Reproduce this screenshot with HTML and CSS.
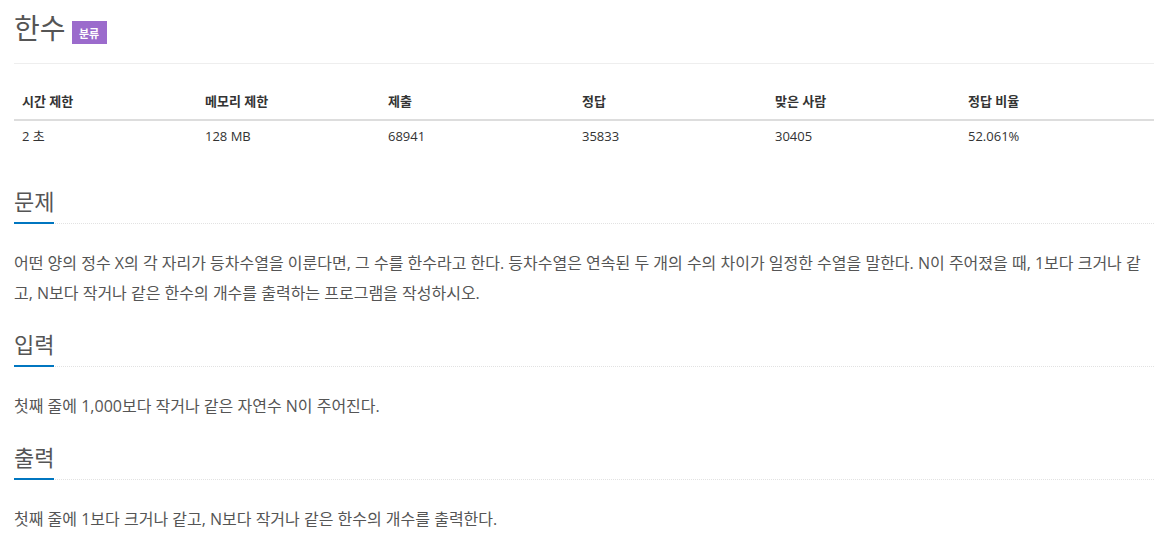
FILE: index.html
```html
<!DOCTYPE html>
<html lang="ko">
<head>
<meta charset="utf-8">
<title>한수</title>
<link rel="stylesheet" href="styles.css">
</head>
<body>
<div class="page">
  <div class="page-header">
    <h1 class="title">한수</h1>
    <span class="badge">분류</span>
  </div>

  <table class="info">
    <colgroup>
      <col class="c1"><col class="c2"><col class="c3"><col class="c4"><col class="c5"><col class="c6">
    </colgroup>
    <thead>
      <tr><th>시간 제한</th><th>메모리 제한</th><th>제출</th><th>정답</th><th>맞은 사람</th><th>정답 비율</th></tr>
    </thead>
    <tbody>
      <tr><td>2 초</td><td>128 MB</td><td>68941</td><td>35833</td><td>30405</td><td>52.061%</td></tr>
    </tbody>
  </table>

  <section class="section">
    <div class="headline"><h2>문제</h2></div>
    <p class="text">어떤 양의 정수 X의 각 자리가 등차수열을 이룬다면, 그 수를 한수라고 한다. 등차수열은 연속된 두 개의 수의 차이가 일정한 수열을 말한다. N이 주어졌을 때, 1보다 크거나 같고, N보다 작거나 같은 한수의 개수를 출력하는 프로그램을 작성하시오.</p>
  </section>

  <section class="section">
    <div class="headline"><h2>입력</h2></div>
    <p class="text">첫째 줄에 1,000보다 작거나 같은 자연수 N이 주어진다.</p>
  </section>

  <section class="section">
    <div class="headline"><h2>출력</h2></div>
    <p class="text">첫째 줄에 1보다 크거나 같고, N보다 작거나 같은 한수의 개수를 출력한다.</p>
  </section>
</div>
</body>
</html>
```

FILE: styles.css
```css
html, body {
  margin: 0;
  padding: 0;
  background: #fff;
}
body {
  font-family: "Open Sans", "Noto Sans CJK KR", sans-serif;
  color: #555;
}
.page {
  padding: 0 17px 0 14px;
}
.page-header {
  display: flex;
  align-items: flex-start;
  gap: 6px;
  height: 63px;
  border-bottom: 1px solid #eee;
  margin-bottom: 19px;
}
.title {
  margin: 9px 0 0 0;
  font-size: 28px;
  line-height: 38px;
  font-weight: 400;
  color: #555;
}
.badge {
  margin-top: 21px;
  display: inline-flex;
  align-items: center;
  justify-content: center;
  width: 35px;
  height: 23px;
  background: #9b6bcc;
  color: #fff;
  font-size: 11px;
  font-weight: 700;
}
.info {
  width: 100%;
  border-collapse: collapse;
  table-layout: fixed;
  font-size: 13px;
}
.c1 { width: 183px; }
.c2 { width: 183px; }
.c3 { width: 194px; }
.c4 { width: 193px; }
.c5 { width: 193px; }
.c6 { width: 194px; }
.info th {
  text-align: left;
  font-weight: 700;
  color: #333;
  padding: 8px;
  line-height: 20px;
  border-bottom: 2px solid #ddd;
}
.info td {
  text-align: left;
  color: #333;
  padding: 5px 8px 10px;
  line-height: 20px;
}
.section {
  margin-top: 31px;
}
.section + .section {
  margin-top: 22px;
}
.headline {
  border-bottom: 1px dotted #e2e2e2;
  margin-bottom: 24px;
}
.headline h2 {
  display: inline-block;
  margin: 0 0 -1px 0;
  font-size: 22px;
  line-height: 28px;
  font-weight: 400;
  color: #555;
  padding-bottom: 7px;
  border-bottom: 2px solid #0076c0;
}
.text {
  margin: 0;
  font-size: 16px;
  line-height: 30px;
  color: #555;
}
```
